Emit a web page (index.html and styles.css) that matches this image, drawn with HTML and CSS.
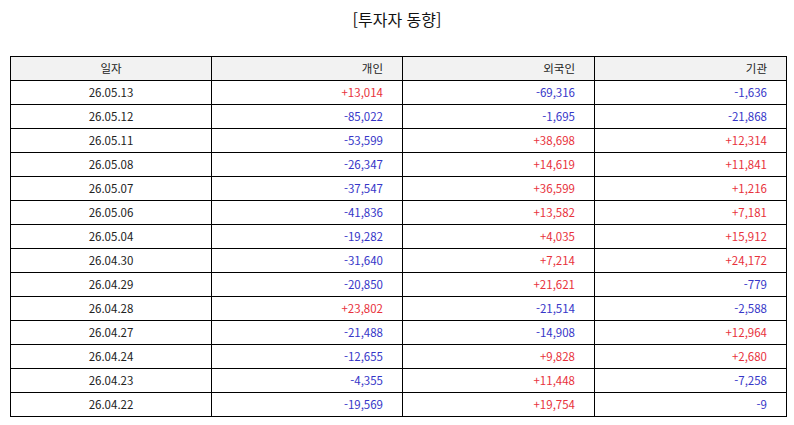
FILE: index.html
```html
<!DOCTYPE html>
<html lang="ko">
<head>
<meta charset="utf-8">
<link rel="stylesheet" href="styles.css">
</head>
<body>
<div class="page">
  <h1 class="title">[투자자 동향]</h1>
  <table class="grid">
    <colgroup>
      <col class="c1"><col class="c2"><col class="c3"><col class="c4">
    </colgroup>
    <thead>
      <tr><th class="date">일자</th><th>개인</th><th>외국인</th><th>기관</th></tr>
    </thead>
    <tbody>
      <tr><td class="date">26.05.13</td><td class="up">+13,014</td><td class="dn">-69,316</td><td class="dn">-1,636</td></tr>
      <tr><td class="date">26.05.12</td><td class="dn">-85,022</td><td class="dn">-1,695</td><td class="dn">-21,868</td></tr>
      <tr><td class="date">26.05.11</td><td class="dn">-53,599</td><td class="up">+38,698</td><td class="up">+12,314</td></tr>
      <tr><td class="date">26.05.08</td><td class="dn">-26,347</td><td class="up">+14,619</td><td class="up">+11,841</td></tr>
      <tr><td class="date">26.05.07</td><td class="dn">-37,547</td><td class="up">+36,599</td><td class="up">+1,216</td></tr>
      <tr><td class="date">26.05.06</td><td class="dn">-41,836</td><td class="up">+13,582</td><td class="up">+7,181</td></tr>
      <tr><td class="date">26.05.04</td><td class="dn">-19,282</td><td class="up">+4,035</td><td class="up">+15,912</td></tr>
      <tr><td class="date">26.04.30</td><td class="dn">-31,640</td><td class="up">+7,214</td><td class="up">+24,172</td></tr>
      <tr><td class="date">26.04.29</td><td class="dn">-20,850</td><td class="up">+21,621</td><td class="dn">-779</td></tr>
      <tr><td class="date">26.04.28</td><td class="up">+23,802</td><td class="dn">-21,514</td><td class="dn">-2,588</td></tr>
      <tr><td class="date">26.04.27</td><td class="dn">-21,488</td><td class="dn">-14,908</td><td class="up">+12,964</td></tr>
      <tr><td class="date">26.04.24</td><td class="dn">-12,655</td><td class="up">+9,828</td><td class="up">+2,680</td></tr>
      <tr><td class="date">26.04.23</td><td class="dn">-4,355</td><td class="up">+11,448</td><td class="dn">-7,258</td></tr>
      <tr><td class="date">26.04.22</td><td class="dn">-19,569</td><td class="up">+19,754</td><td class="dn">-9</td></tr>
    </tbody>
  </table>
</div>
</body>
</html>
```
FILE: styles.css
```css
html, body {
  margin: 0;
  padding: 0;
  background: #fff;
}
.page {
  padding: 0 10px;
  font-family: "Noto Sans CJK KR", "Noto Sans", sans-serif;
  color: #222;
}
.title {
  margin: 0;
  padding-top: 7px;
  height: 56px;
  box-sizing: border-box;
  text-align: center;
  font-size: 16px;
  font-weight: normal;
  line-height: 24px;
  color: #111;
}
.grid {
  width: 776px;
  border-collapse: collapse;
  table-layout: fixed;
  font-size: 11.5px;
}
.c1 { width: 201px; }
.c2 { width: 191px; }
.c3 { width: 192px; }
.c4 { width: 192px; }
.grid tr {
  height: 24px;
}
.grid th, .grid td {
  border: 1px solid #000;
  padding: 0 19px 2px 4px;
  text-align: right;
  font-weight: normal;
  line-height: 14px;
}
.grid thead th {
  background: #f2f2f2;
  color: #222;
}
.grid .date {
  text-align: center;
  padding: 0 4px 2px;
  color: #222;
}
.up { color: #e8323c; }
.dn { color: #3636c8; }
```
